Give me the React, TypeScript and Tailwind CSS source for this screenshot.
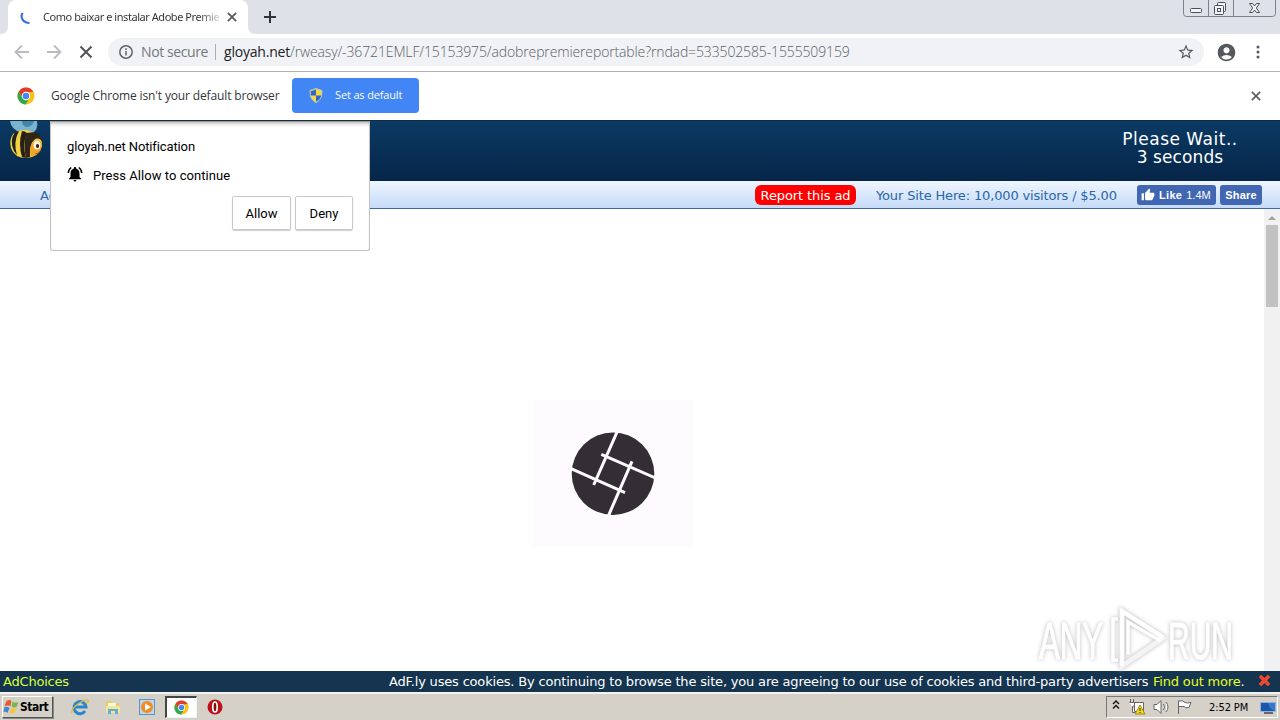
import React from "react";
import { MdAccountCircle, MdNotificationsActive, MdStarBorder, MdThumbUp } from "react-icons/md";

const ChromeLogo = ({ size = 18 }: { size?: number }) => (
  <svg width={size} height={size} viewBox="0 0 18 18">
    <circle cx="9" cy="9" r="8.5" fill="#fbc116" />
    <path d="M1.6 4.8A8.5 8.5 0 0 1 16.4 4.8L9 5.3 5.8 11Z" fill="#e33b2e" />
    <path d="M1.6 4.8A8.5 8.5 0 0 0 8.6 17.5L12.3 11 9 12.8 5.6 11Z" fill="#2da94f" />
    <circle cx="9" cy="9" r="4.2" fill="#fff" />
    <circle cx="9" cy="9" r="3.3" fill="#4688f1" />
  </svg>
);

const Cross = ({ size, color, width = 2 }: { size: number; color: string; width?: number }) => (
  <svg width={size} height={size} viewBox="0 0 12 12" fill="none" stroke={color} strokeWidth={width}>
    <path d="M1 1l10 10M11 1L1 11" />
  </svg>
);

const TabStrip = () => (
  <div className="flex h-[34px] bg-[#dee1e8] relative">
    <svg width="8" height="8" viewBox="0 0 8 8" className="self-end" fill="#fff">
      <path d="M8 0v8H0q8 0 8-8z" />
    </svg>
    <div className="w-[240px] h-full bg-white rounded-t-lg flex items-center">
      <svg width="12" height="14" viewBox="0 0 12 14" className="ml-3 mt-[2px] shrink-0" fill="none" stroke="#3b71dc" strokeWidth="2.2">
        <path d="M2.500 2C0 6.500 3 12 9.500 12" />
      </svg>
      <div className="ml-[11px] w-[177px] whitespace-nowrap font-['Noto_Sans','Open_Sans',sans-serif] text-[11px] tracking-[-0.45px] text-transparent bg-clip-text bg-linear-to-r from-[#303236] from-88% to-[#ddd]">
        Como baixar e instalar Adobe Premie
      </div>
      <div className="ml-[7px]">
        <Cross size={10} color="#55585c" width={2} />
      </div>
    </div>
    <svg width="8" height="8" viewBox="0 0 8 8" className="self-end" fill="#fff">
      <path d="M0 0v8h8q-8 0-8-8z" />
    </svg>
    <svg width="12" height="12" viewBox="0 0 12 12" className="ml-2 mt-[11px]" stroke="#303338" strokeWidth="2">
      <path d="M6 0v12M0 6h12" />
    </svg>
    <svg width="94" height="17" viewBox="0 0 94 17" className="absolute left-[1183px] top-0" fill="none" stroke="#7d828d">
      <path d="M.5 0v13.500q0 3 3 3h86q3 0 3-3V0M25.500 0v16M50.500 0v16" />
      <g stroke="#4b4f59" fill="#f2f4f7">
        <rect x="7.500" y="8.500" width="11" height="4" rx="1" />
        <rect x="34.500" y="2.500" width="8" height="9" rx="1" />
        <rect x="31.500" y="5.500" width="9" height="9" rx="1" />
        <rect x="34.500" y="8.500" width="3" height="3" />
        <path d="M66.500 3.500h3l2 2.500 2-2.500h3l-3.200 4.500 3.200 4.500h-3l-2-2.500-2 2.500h-3l3.200-4.500z" />
      </g>
    </svg>
  </div>
);

const Toolbar = () => (
  <div className="flex items-center h-[38px] border-b border-[#b0b2b4] bg-white pl-[14px] pb-px">
    <svg width="80" height="16" viewBox="0 0 80 16" fill="none" strokeWidth="1.8">
      <path d="M15 8H2M8 1.500L1.500 8 8 14.500M33 8h13M40 1.500L46.500 8 40 14.500" stroke="#b9bbbe" />
      <path d="M66.500 2.500l11 11M77.500 2.500l-11 11" stroke="#505357" strokeWidth="2" />
    </svg>
    <div className="ml-[14px] w-[1096px] h-7 rounded-full bg-[#f0f2f5] flex items-center font-['Open_Sans','Noto_Sans',sans-serif] text-[14px] text-[#74787d] whitespace-nowrap">
      <svg width="14" height="14" viewBox="0 0 14 14" className="ml-[11px]" fill="none" stroke="#606368" strokeWidth="1.5">
        <circle cx="7" cy="7" r="6.200" />
        <path d="M7 6v4.500M7 3.300v1.600" />
      </svg>
      <span className="ml-2 w-[74px] pb-[2px] tracking-[-0.4px]">Not secure</span>
      <span className="w-px h-4 bg-[#aaadb1]" />
      <span className="ml-2 w-[66px] pb-[2px] text-[#202124] tracking-[-0.2px]">gloyah.net</span>
      <span className="pb-[2px] font-light text-[#5c6065] tracking-[-0.13px]">
        /rweasy/-36721EMLF/15153975/adobrepremiereportable?rndad=533502585-1555509159
      </span>
      <MdStarBorder size={18} className="ml-auto mr-[9px] text-[#55585c]" />
    </div>
    <MdAccountCircle size={21} className="ml-[12px] text-[#55585c]" />
    <svg width="4" height="14" viewBox="0 0 4 14" className="ml-[19px]" fill="#55585c">
      <circle cx="2" cy="2" r="1.500" />
      <circle cx="2" cy="7" r="1.500" />
      <circle cx="2" cy="12" r="1.500" />
    </svg>
  </div>
);

const DefaultBrowserBar = () => (
  <div className="flex items-center h-12 bg-white pl-[17px] font-['Open_Sans','Noto_Sans',sans-serif]">
    <ChromeLogo />
    <span className="ml-4 w-[241px] text-[12px] text-[#33363a] whitespace-nowrap tracking-[-0.14px]">
      Google Chrome isn't your default browser
    </span>
    <div className="mb-[2px] w-[127px] h-[35px] rounded bg-[#4285f4] flex items-center text-white text-[11px] whitespace-nowrap">
      <svg width="14" height="15" viewBox="0 0 14 15" className="ml-[17px]">
        <path d="M7 .5l6 2C13 8 12 12 7 14.500 2 12 1 8 1 2.500z" fill="#f7d842" stroke="#b9c4c9" />
        <path d="M7 1.500v6H1.900L1.700 3.200zM7 7.500h5.200c-.7 3-2 4.800-5.200 6z" fill="#2d69c8" />
      </svg>
      <span className="ml-3 tracking-[-0.15px]">Set as default</span>
    </div>
    <div className="ml-auto mr-[19px]">
      <Cross size={10} color="#5f6368" width={2.2} />
    </div>
  </div>
);

const Bee = () => (
  <svg width="36" height="40" viewBox="0 0 36 40" className="ml-2">
    <path d="M2 0q1 8 11 12l10 1Q31 9 29 0z" fill="#78b3cf" />
    <path d="M14 0q0 5 5 6 6-1 7-6z" fill="#3f86ab" />
    <path d="M5 13q8-6 17-3 13 4 12 15-3 11-15 12Q6 37 3 27 1 19 5 13z" fill="#f2d243" />
    <path d="M7 11q-6 9-1 19l3 4q-4-13 2-24z" fill="#252019" />
    <path d="M14 10q3 0 5 2-5 11-1 25l-4-1q-4-13 0-26z" fill="#252019" />
    <path d="M18 12l9-1q7 3 8 11-4-7-9-3-5 5-4 17l-4 1q-3-13 0-25z" fill="#302519" />
    <path d="M34 22q-5-6-9-1-4 6-2 15 10-3 11-12z" fill="#efa628" />
    <ellipse cx="29" cy="24" rx="3.500" ry="4.500" fill="#fff4d9" />
    <ellipse cx="29.500" cy="25" rx="1.600" ry="2" fill="#2d1640" />
    <path d="M27 33q4 0 6-4" stroke="#9b5b12" fill="none" />
  </svg>
);

const SiteHeader = () => (
  <div className="flex h-[61px] justify-between bg-linear-to-b from-[#0b3a64] to-[#062548] border-t border-[#152b3b]">
    <Bee />
    <div className="mt-[9px] mr-[40px] w-[120px] text-center text-white text-[17px] leading-[18px] whitespace-nowrap">
      <span className="tracking-[0.5px]">Please Wait..</span>
      <br />
      <span className="tracking-[0.1px]">3 seconds</span>
    </div>
  </div>
);

const AdBar = () => (
  <div className="flex items-center h-7 bg-linear-to-b from-[#eff6ff] to-[#c5dbf7] border-b border-[#3e68ae] text-[13px] text-[#2b66a8] whitespace-nowrap">
    <span className="ml-10 w-[715px] pt-[2px]">Advertise</span>
    <span className="w-[101px] h-5 rounded-md bg-[#fe0000] text-white flex items-center justify-center pt-[2px] tracking-[-0.1px]">
      Report this ad
    </span>
    <span className="ml-5 w-[261px] pt-[2px] tracking-[-0.15px]">Your Site Here: 10,000 visitors / $5.00</span>
    <div className="w-[79px] h-5 rounded-[3px] bg-[#4267b2] text-white flex items-center font-['Liberation_Sans',sans-serif] text-[11px]">
      <MdThumbUp size={14} className="ml-1" />
      <b className="ml-1 pt-px tracking-[0.3px]">Like</b>
      <span className="ml-1 pt-px">1.4M</span>
    </div>
    <b className="ml-1 w-[42px] h-5 rounded-[3px] bg-[#4267b2] text-white flex items-center justify-center pt-px font-['Liberation_Sans',sans-serif] text-[11px] tracking-[0.2px]">
      Share
    </b>
  </div>
);

const NotificationPrompt = () => (
  <div className="absolute left-[50px] top-[121px] w-[320px] h-[130px] bg-white border border-[#c2c2c2] border-t-[#999] rounded-b-[3px] px-4 pt-[17px] font-['Roboto',sans-serif] text-[13px] leading-4 text-black shadow-[inset_0_4px_4px_-3px_#aaa]">
    <p className="tracking-[-0.12px]">gloyah.net Notification</p>
    <div className="flex items-center mt-3 h-4">
      <MdNotificationsActive size={18} className="-ml-px -mt-[2px]" />
      <span className="ml-[9px] pt-[2px] tracking-[0.05px]">Press Allow to continue</span>
    </div>
    <div className="flex justify-end gap-1 mt-[13px]">
      <button className="w-[59px] h-[34px] pt-px border border-[#c9c9c9] rounded-[2px] shadow-[0_1px_1px_#ccc]">Allow</button>
      <button className="w-[58px] h-[34px] pt-px border border-[#c9c9c9] rounded-[2px] shadow-[0_1px_1px_#ccc]">Deny</button>
    </div>
  </div>
);

const Content = () => (
  <div className="flex h-[462px] bg-white justify-between">
    <div className="w-[160px] h-[146px] ml-[533px] mt-[191px] pt-[2px] bg-[#fefbff] flex items-center justify-center">
      <svg width="84" height="84" viewBox="571 432 84 84">
        <circle cx="613" cy="473.700" r="41.300" fill="#332e33" />
        <path d="M617.500 431l-23.800 54M601.300 454.300l54 23.700M570.500 468.300l54.500 24.400M632 461.300L608.300 516" stroke="#fefbff" strokeWidth="3" />
      </svg>
    </div>
    <div className="w-4 bg-[#f1f1f1] flex flex-col items-center">
      <svg width="8" height="5" viewBox="0 0 8 5" className="mt-[6px]" fill="#a3a3a3">
        <path d="M0 5l4-4 4 4z" />
      </svg>
      <div className="mt-[5px] w-3 h-[82px] bg-[#c1c1c1]" />
    </div>
  </div>
);

const Watermark = () => (
  <svg width="210" height="70" viewBox="0 0 210 70" className="absolute left-[1034px] top-[606px] drop-shadow-[0_0_2px_#bbb]">
    <g fill="#fff" stroke="#fff" strokeWidth="1" fontFamily="Liberation Sans Narrow, Liberation Sans, sans-serif" fontSize="51">
      <text x="5" y="53" textLength="64" lengthAdjust="spacingAndGlyphs">ANY</text>
      <text x="134" y="53" textLength="65" lengthAdjust="spacingAndGlyphs">RUN</text>
    </g>
    <g fill="none" stroke="#fff">
      <path d="M84 13h-5v41h5" strokeWidth="3.500" />
      <path d="M88 5l41 27-41 28z" stroke="#f4f4f4" strokeWidth="5" />
      <path d="M88 60V5l40 25-3 4-31-18v32" strokeWidth="3.500" />
    </g>
  </svg>
);

const CookieBar = () => (
  <div className="flex items-center h-[21px] bg-[#15344f] text-[13px] text-white whitespace-nowrap">
    <span className="ml-[3px] w-[386px] text-[#ddff3c] tracking-[-0.2px]">AdChoices</span>
    <span className="w-[764px] tracking-[-0.18px]">
      AdF.ly uses cookies. By continuing to browse the site, you are agreeing to our use of cookies and third-party advertisers
    </span>
    <span className="w-[106px] tracking-[-0.18px]">
      <span className="text-[#e5ff22]">Find out more</span>.
    </span>
    <div className="mb-[3px]">
      <Cross size={11} color="#ed492d" width={4} />
    </div>
  </div>
);

const Taskbar = () => (
  <div className="flex items-center h-7 bg-[#d5d0c8] border-t-2 border-[#f3f2ee] font-['DejaVu_Sans_Condensed','DejaVu_Sans',sans-serif] text-[11px] text-black whitespace-nowrap">
    <div className="ml-[2px] w-[51px] h-[22px] flex items-center border border-t-white border-l-white border-r-[#555] border-b-[#555] shadow-[1px_1px_0_#888]">
      <svg width="17" height="16" viewBox="0 0 16 16" className="shrink-0">
        <path d="M3 2q3-2 5 0L7 7Q4 6 1 7z" fill="#e65d2d" />
        <path d="M9 3q3 1 6 0l-2 5q-3 1-5-.500z" fill="#76b947" />
        <path d="M1 8q3-1 5 1l-2 5q-2-2-4-1z" fill="#4487d1" />
        <path d="M8 9q3 1 5 0l-2 5q-3 1-5-.500z" fill="#f4c53d" />
      </svg>
      <b className="text-[12px] tracking-[-0.5px]">Start</b>
    </div>
    <svg width="18" height="18" viewBox="0 0 18 18" className="ml-[18px]" fill="none">
      <path d="M14 13A6 6 0 1 1 15 9H4" stroke="#2687cf" strokeWidth="3" />
      <path d="M1 15Q0 11 7 6t10-4q1 2-2 4" stroke="#e5b83c" strokeWidth="1.300" />
    </svg>
    <svg width="16" height="16" viewBox="0 0 16 16" className="ml-4">
      <path d="M1 2h5l1 2h7v10H1z" fill="#e7c967" />
      <path d="M3 4h8v5H3z" fill="#fff9d8" />
      <path d="M1 7h14v7H1z" fill="#f4e49a" />
      <path d="M3 15v-5h10v5h-3v-3H6v3z" fill="#60afd8" />
    </svg>
    <svg width="16" height="16" viewBox="0 0 16 16" className="ml-[18px]">
      <rect x=".5" y=".5" width="15" height="15" fill="#b9d7ed" stroke="#5b97c4" />
      <circle cx="8" cy="8" r="6" fill="#f18b22" />
      <path d="M6 4.500l6 3.500-6 3.500z" fill="#fff" />
    </svg>
    <div className="ml-[10px] w-8 h-[22px] bg-white border border-t-2 border-l-2 border-t-[#444] border-l-[#444] border-[#f3f3f3] flex items-center justify-center">
      <ChromeLogo size={15} />
    </div>
    <svg width="16" height="16" viewBox="0 0 16 16" className="ml-[10px]">
      <circle cx="8" cy="8" r="7.500" fill="#bd1118" />
      <ellipse cx="8" cy="8" rx="2.200" ry="5" fill="#8d0910" stroke="#fff" strokeWidth="1.700" />
    </svg>
    <div className="ml-auto mr-[2px] w-[172px] h-[22px] border border-t-[#777] border-l-[#777] border-b-white border-r-white flex items-center">
      <svg width="8" height="10" viewBox="0 0 8 10" className="ml-[5px] mb-1" fill="none" stroke="#111" strokeWidth="1.400">
        <path d="M1 4l3-3 3 3M1 8.500l3-3 3 3" />
      </svg>
      <svg width="66" height="16" viewBox="0 0 66 16" className="ml-2" fill="#fff" stroke="#666">
        <path d="M2.500 0v3M5.500 0v3M1.500 3.500h5v3l-2 1v6h3M6.500 3.500h9v9h-9z" />
        <path d="M12 6l5 9H7z" fill="#f7d91c" stroke="#a48b10" />
        <path d="M12 9v3M12 13v1" stroke="#222" />
        <path d="M26 5.500h3l4-4v13l-4-4h-3zM35.500 5q2 3 0 6M38 3q4 5 0 10" />
        <path d="M50.500 15V1.500M51 2q4-1 6 1.500 2 1 6 0l-2 5q-4 1-5-1H51" />
      </svg>
      <span className="ml-[15px] pt-[2px] tracking-[-0.1px]">2:52 PM</span>
      <svg width="17" height="15" viewBox="0 0 17 15" className="ml-auto">
        <path d="M0 2h16v10H0z" fill="#8db5df" />
        <path d="M1 3h14v8H1z" fill="#1c56aa" />
        <path d="M8 3h7v8q-6-2-7-8z" fill="#3978ca" />
        <path d="M4 13h9" stroke="#444" strokeWidth="1.500" />
      </svg>
    </div>
  </div>
);

const App = () => {
  return (
    <div className="relative w-[1280px] h-[720px] overflow-hidden bg-white font-['DejaVu_Sans',sans-serif]">
      <TabStrip />
      <Toolbar />
      <DefaultBrowserBar />
      <SiteHeader />
      <AdBar />
      <Content />
      <CookieBar />
      <Taskbar />
      <NotificationPrompt />
      <Watermark />
    </div>
  );
};

export default App;
